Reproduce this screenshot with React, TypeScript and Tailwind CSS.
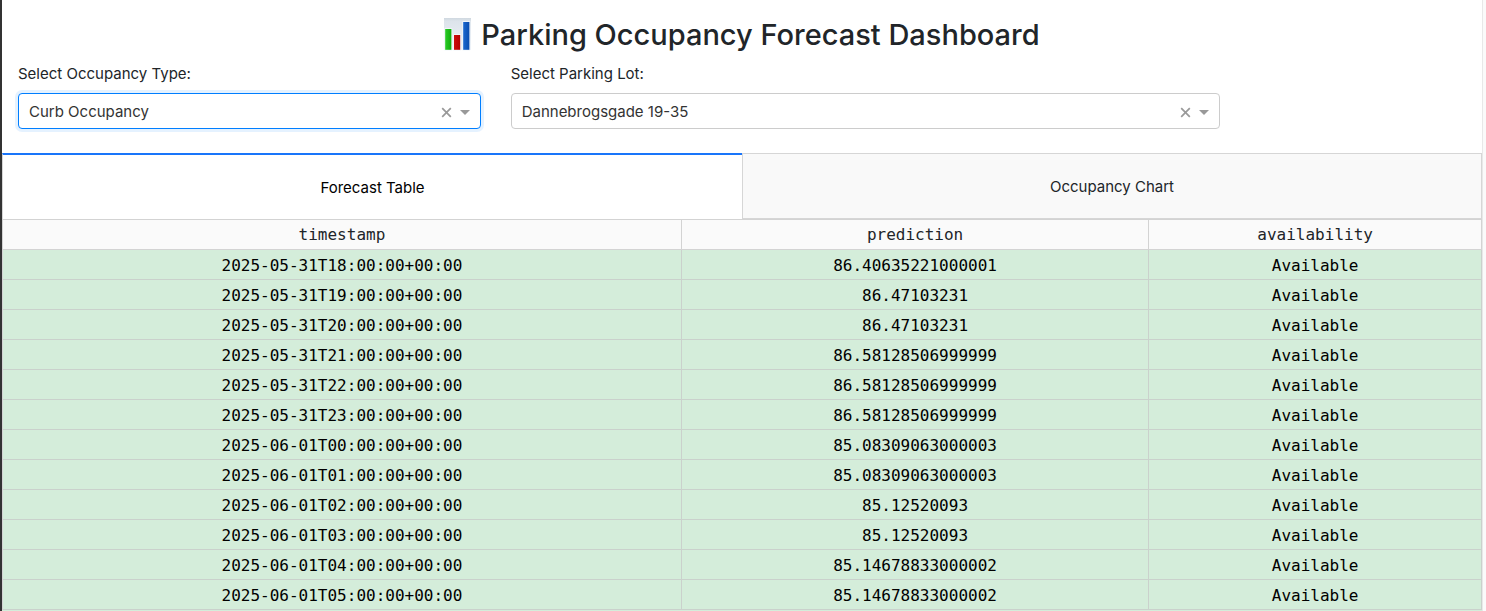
import { useState } from "react";

const rows: [string, string, string][] = [
  ["2025-05-31T18:00:00+00:00", "86.40635221000001", "Available"],
  ["2025-05-31T19:00:00+00:00", "86.47103231", "Available"],
  ["2025-05-31T20:00:00+00:00", "86.47103231", "Available"],
  ["2025-05-31T21:00:00+00:00", "86.58128506999999", "Available"],
  ["2025-05-31T22:00:00+00:00", "86.58128506999999", "Available"],
  ["2025-05-31T23:00:00+00:00", "86.58128506999999", "Available"],
  ["2025-06-01T00:00:00+00:00", "85.08309063000003", "Available"],
  ["2025-06-01T01:00:00+00:00", "85.08309063000003", "Available"],
  ["2025-06-01T02:00:00+00:00", "85.12520093", "Available"],
  ["2025-06-01T03:00:00+00:00", "85.12520093", "Available"],
  ["2025-06-01T04:00:00+00:00", "85.14678833000002", "Available"],
  ["2025-06-01T05:00:00+00:00", "85.14678833000002", "Available"],
];

const columns = ["timestamp", "prediction", "availability"];

function ChartIcon() {
  return (
    <svg width="27" height="34" viewBox="0 0 27 34" aria-hidden="true">
      <defs>
        <linearGradient id="paper" x1="0" y1="0" x2="0" y2="1">
          <stop offset="0" stopColor="#cfd8e0" />
          <stop offset="0.1" stopColor="#dde4eb" />
          <stop offset="1" stopColor="#edf2f8" />
        </linearGradient>
        <linearGradient id="green" x1="0" y1="0" x2="1" y2="0">
          <stop offset="0" stopColor="#2bcb26" />
          <stop offset="1" stopColor="#10ac0c" />
        </linearGradient>
        <linearGradient id="red" x1="0" y1="0" x2="1" y2="0">
          <stop offset="0" stopColor="#cf0d0d" />
          <stop offset="1" stopColor="#b30000" />
        </linearGradient>
        <linearGradient id="blue" x1="0" y1="0" x2="1" y2="0">
          <stop offset="0" stopColor="#1b68cf" />
          <stop offset="1" stopColor="#0a4cae" />
        </linearGradient>
      </defs>
      <rect width="27" height="32" fill="url(#paper)" />
      <g stroke="#f4f8fc" strokeWidth="1.6">
        <rect x="1.2" y="11" width="6.2" height="20.8" />
        <rect x="10" y="17" width="6.2" height="14.8" />
        <rect x="19.2" y="4" width="6.2" height="27.8" />
      </g>
      <rect x="1.2" y="11" width="6.2" height="20.8" fill="url(#green)" />
      <rect x="10" y="17" width="6.2" height="14.8" fill="url(#red)" />
      <rect x="19.2" y="4" width="6.2" height="27.8" fill="url(#blue)" />
    </svg>
  );
}

interface DropdownProps {
  id: string;
  label: string;
  options: string[];
  active?: boolean;
}

function Dropdown({ id, label, options, active }: DropdownProps) {
  const [value, setValue] = useState(options[0]);
  return (
    <div>
      <label htmlFor={id} className="mb-[7px] block leading-6">
        {label}
      </label>
      <div className="relative">
        <select
          id={id}
          value={value}
          onChange={(e) => setValue(e.target.value)}
          className={
            active
              ? "block h-9 w-full appearance-none rounded border border-[#007eff] bg-white px-[10px] pt-0.5 text-[#333] shadow-[0_0_0_3px_rgba(0,126,255,0.1)] outline-none"
              : "block h-9 w-full appearance-none rounded border border-[#ccc] bg-white px-[10px] pt-0.5 text-[#333] outline-none"
          }
        >
          <option value="" hidden />
          {options.map((o) => (
            <option key={o}>{o}</option>
          ))}
        </select>
        <div className="pointer-events-none absolute inset-y-0 right-[11px] flex items-center gap-2 pt-0.5">
          <button
            type="button"
            aria-label="Clear value"
            onClick={() => setValue("")}
            className="pointer-events-auto"
          >
            <svg width="11" height="11" viewBox="0 0 11 11" aria-hidden="true">
              <path d="M1.2 1.2L9.8 9.8M9.8 1.2L1.2 9.8" stroke="#999" strokeWidth="1.7" />
            </svg>
          </button>
          <svg width="10" height="5" viewBox="0 0 10 5" aria-hidden="true">
            <path d="M0 0H10L5 5Z" fill="#999" />
          </svg>
        </div>
      </div>
    </div>
  );
}

export default function App() {
  const [tab, setTab] = useState(0);
  return (
    <div className="flex min-h-screen border-l-2 border-[#333] bg-white font-['Inter','Liberation_Sans',sans-serif] text-[15px] text-[#212529]">
      <main className="flex min-w-0 flex-1 flex-col">
        <h1 className="mb-1 flex items-center justify-center gap-[10px] pt-4 text-[29px] leading-[38px] font-medium">
          <ChartIcon />
          Parking Occupancy Forecast Dashboard
        </h1>
        <div className="mb-6 grid grid-cols-12 gap-x-[30px] px-4 pt-1">
          <div className="col-span-4">
            <Dropdown
              id="occupancy-type"
              label="Select Occupancy Type:"
              options={["Curb Occupancy"]}
              active
            />
          </div>
          <div className="col-span-6">
            <Dropdown
              id="parking-lot"
              label="Select Parking Lot:"
              options={["Dannebrogsgade 19-35"]}
            />
          </div>
        </div>

        <div role="tablist" className="grid h-[66px] grid-cols-2">
          {["Forecast Table", "Occupancy Chart"].map((name, i) => (
            <button
              key={name}
              type="button"
              role="tab"
              aria-selected={tab === i}
              onClick={() => setTab(i)}
              className={
                tab === i
                  ? "border-t-2 border-l border-t-[#1975fa] border-l-[#d6d6d6] bg-white pt-0.5 text-black"
                  : "border border-[#d6d6d6] bg-[#f9f9f9] pt-0.5"
              }
            >
              {name}
            </button>
          ))}
        </div>

        <table className="w-full table-fixed border-separate border-spacing-0 border-t border-l border-[#d3d3d3] text-center font-['DejaVu_Sans_Mono','Liberation_Mono',monospace] text-base">
          <colgroup>
            <col className="w-[45.9%]" />
            <col className="w-[31.6%]" />
            <col className="w-[22.5%]" />
          </colgroup>
          <thead>
            <tr>
              {columns.map((c) => (
                <th
                  key={c}
                  className="h-[30px] border-r border-b border-[#d3d3d3] bg-[#fafafa] p-0 leading-5 font-normal"
                >
                  {c}
                </th>
              ))}
            </tr>
          </thead>
          <tbody>
            {rows.map((row) => (
              <tr key={row[0]}>
                {row.map((cell, i) => (
                  <td
                    key={i}
                    className="h-[30px] border-r border-b border-[#cad1cc] bg-[#d4edda] p-0 pt-0.5 leading-5 text-black"
                  >
                    {cell}
                  </td>
                ))}
              </tr>
            ))}
          </tbody>
        </table>
        <div className="flex-1 bg-[#d4edda]" />
      </main>
      <div className="w-1 border-l border-[#e8e8e8] bg-[#fafafa]" />
    </div>
  );
}
